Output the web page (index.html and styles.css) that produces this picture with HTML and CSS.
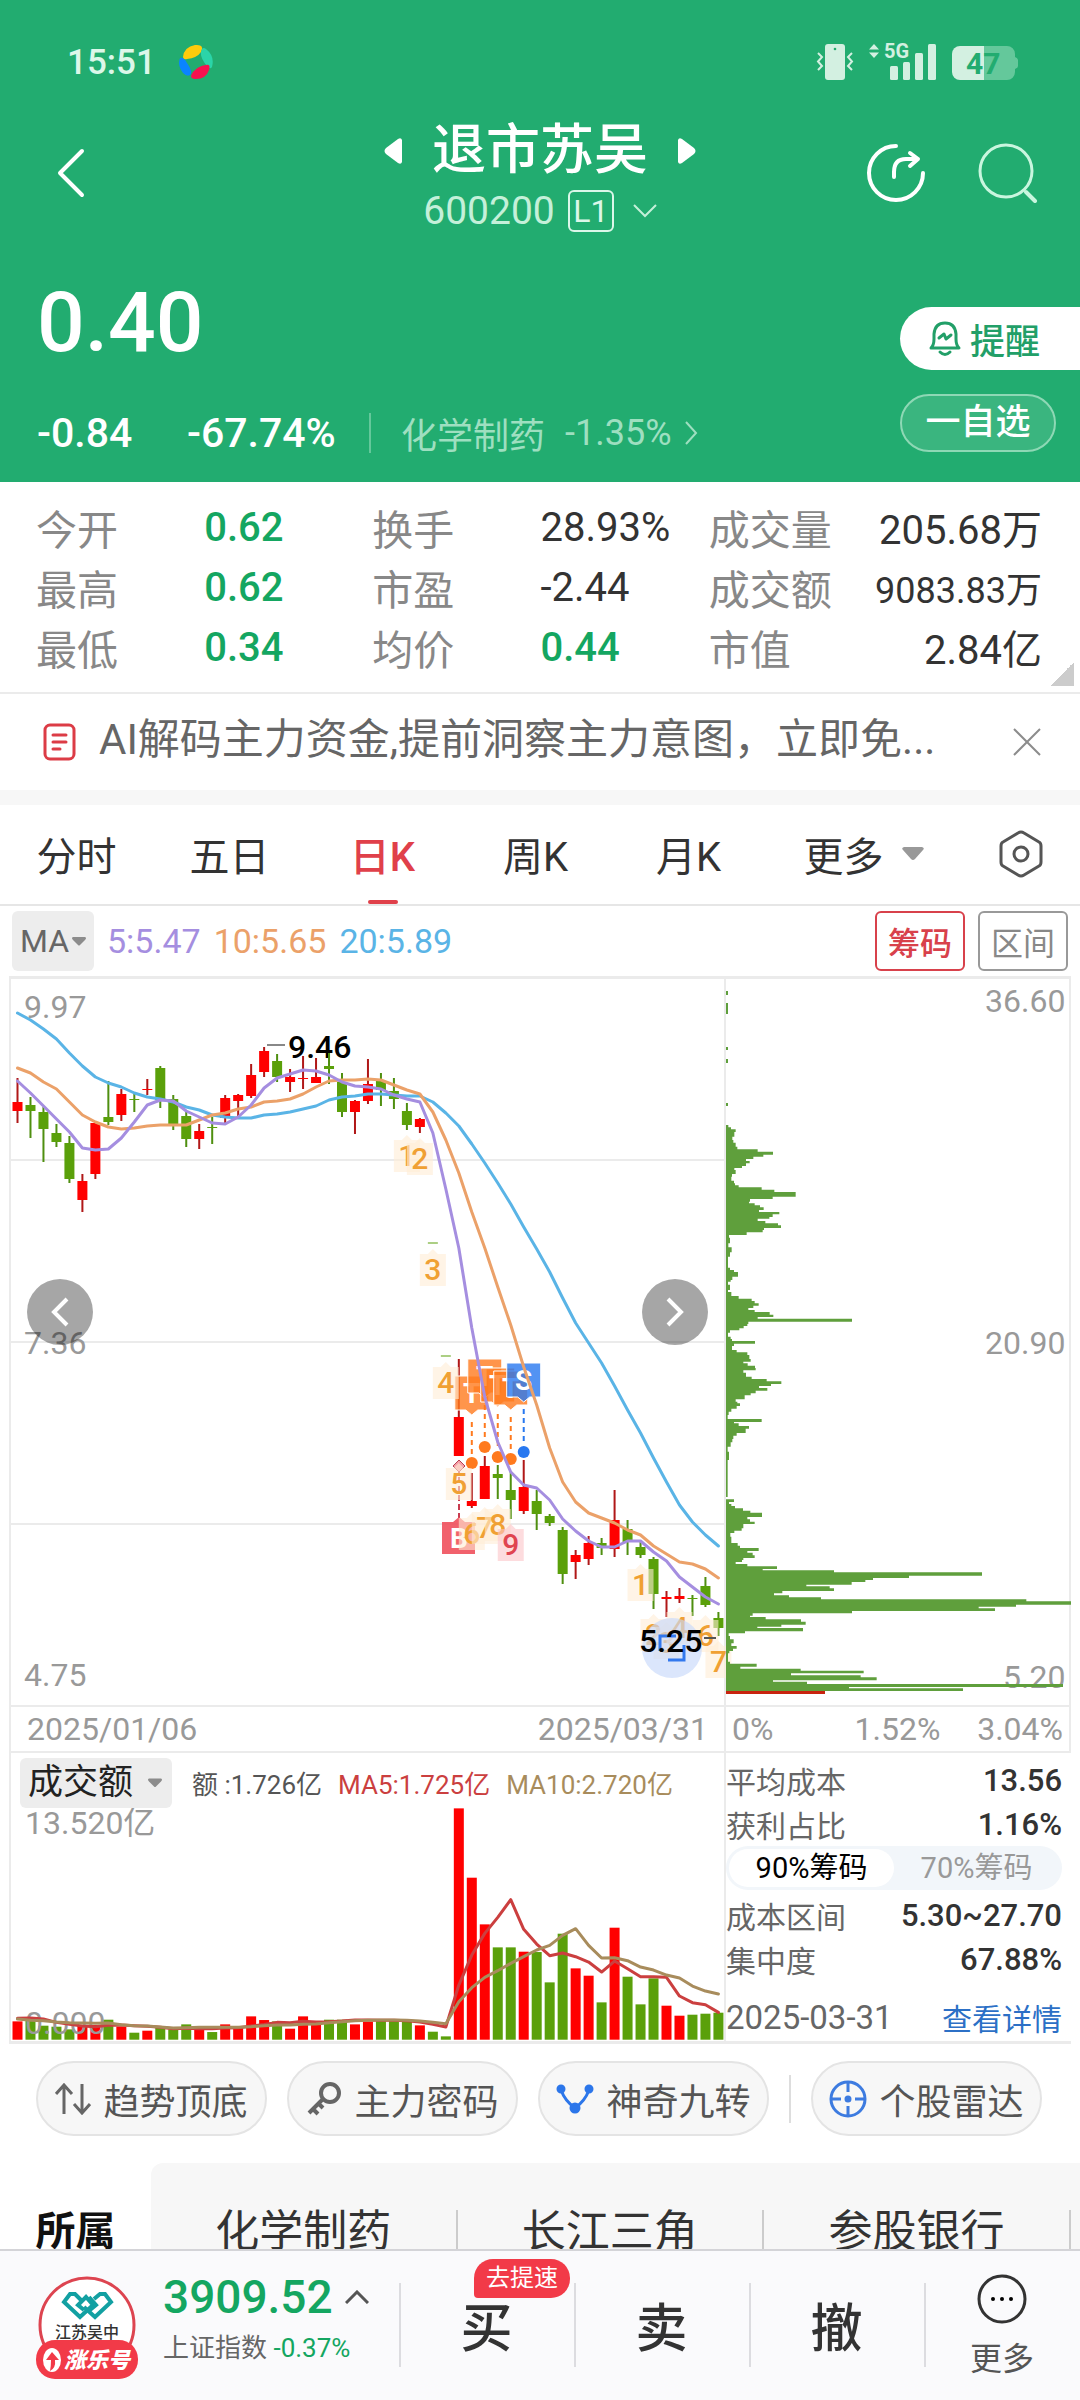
FILE: index.html
```html
<!DOCTYPE html>
<html lang="zh-CN">
<head>
<meta charset="utf-8">
<meta name="viewport" content="width=device-width, initial-scale=1">
<title>退市苏吴 600200</title>
<link rel="stylesheet" href="styles.css">
</head>
<body>
<div class="app">
  <header class="quote-header">
    <div class="status-bar">
      <div class="status-time">
        <span>15:51</span>
        <svg width="36" height="36" viewBox="0 0 36 36" aria-hidden="true">
          <path d="M5 13 Q6 3 17 1 Q27 0 23 8 Q19 14 9 15 Q5 16 5 13Z" fill="#fecb0c"/>
          <path d="M23 8 Q24 2 28 5 Q37 12 34 23 Q32 26 29 22Q22 14 23 8Z" fill="#2bd4a8"/>
          <path d="M31 26 Q28 35 18 35 Q10 35 15 28 Q20 22 28 21 Q33 20 31 26Z" fill="#f8104f"/>
          <path d="M2 14 Q6 13 9 19 Q14 26 13 30 Q10 34 5 29 Q-1 21 2 14Z" fill="#0a84ff"/>
        </svg>
      </div>
      <svg width="204" height="44" viewBox="17 20 204 44" aria-hidden="true" fill="#d3f0e1">
        <rect x="26" y="24" width="20" height="36" rx="3"/>
        <circle cx="36" cy="29" r="1.300" fill="#22ac70"/>
        <path d="M19 33 l4 4 -4 4.500 4 4.500 -4 4 M53 33 l-4 4 4 4.500 -4 4.500 4 4" fill="none" stroke="#d3f0e1" stroke-width="2"/>
        <path d="M75 24 l5 5.500 h-10z M75 38 l5 -5.500 h-10z"/>
        <text x="85" y="38" class="net-label">5G</text>
        <rect x="91" y="46" width="8" height="14" rx="1.500"/>
        <rect x="104" y="42" width="7" height="18" rx="1.500"/>
        <rect x="116" y="33" width="8" height="27" rx="1.500"/>
        <rect x="129" y="24" width="8" height="36" rx="1.500"/>
        <path d="M185 26 h23 a8 8 0 0 1 8 8 v3 q3 1 3 3 v6 q0 2 -3 3 v3 a8 8 0 0 1 -8 8 h-23z" fill="#64c89b"/>
        <path d="M185 26 v34 h-24 a8 8 0 0 1 -8 -8 v-18 a8 8 0 0 1 8 -8z"/>
        <text x="167" y="54" class="battery-label" fill="#22ac70">47</text>
      </svg>
    </div>
    <nav class="nav-bar">
      <button class="icon-button back-button" aria-label="返回">
        <svg width="30" height="52" viewBox="0 0 30 52" fill="none" stroke="#fff" stroke-width="4" stroke-linecap="round" stroke-linejoin="round"><path d="M26 4 L4 26 L26 48"/></svg>
      </button>
      <div class="stock-heading">
        <div class="stock-title">
          <button class="icon-button" aria-label="上一只"><svg width="18" height="26" viewBox="0 0 18 26" fill="#fff"><path d="M18 2 V24 Q17 27 14 25 L2 16 Q-1 13 2 10 L14 1 Q17 -1 18 2Z"/></svg></button>
          <h1>退市苏吴</h1>
          <button class="icon-button" aria-label="下一只"><svg width="18" height="26" viewBox="0 0 18 26" fill="#fff"><path d="M0 2 V24 Q1 27 4 25 L16 16 Q19 13 16 10 L4 1 Q1 -1 0 2Z"/></svg></button>
        </div>
        <div class="stock-code">
          <span>600200</span>
          <span class="level-badge">L1</span>
          <svg class="code-arrow" width="24" height="14" viewBox="0 0 24 14" fill="none" stroke="#c4f0d9" stroke-width="2"><path d="M1 1 L12 12 L23 1"/></svg>
        </div>
      </div>
      <div class="nav-actions">
        <button class="icon-button" aria-label="分享">
          <svg width="60" height="60" viewBox="0 0 60 60" fill="none" stroke="#fff" stroke-width="4" stroke-linecap="round" stroke-linejoin="round"><path d="M30 3 A27 27 0 1 0 57 30 M28 34 V29 Q28 16 40 16 H52 M44 10 L52 16 L44 23"/></svg>
        </button>
        <button class="icon-button" aria-label="搜索">
          <svg width="60" height="60" viewBox="0 0 60 60" fill="none" stroke="#c9f6df" stroke-width="3" stroke-linecap="round"><circle cx="28" cy="28" r="26"/><path d="M48 49 L57 58" stroke-width="4"/></svg>
        </button>
      </div>
    </nav>
    <section class="quote">
      <div class="quote-main">
        <div class="price">0.40</div>
        <div class="change-row">
          <span class="change">-0.84</span>
          <span class="change-pct">-67.74%</span>
          <a class="sector" href="#sector"><span>化学制药</span><span>-1.35%</span>
            <svg width="14" height="24" viewBox="0 0 14 24" fill="none" stroke="currentColor" stroke-width="2"><path d="M2 1 L12 12 L2 23"/></svg></a>
        </div>
      </div>
      <div class="quote-actions">
        <button class="remind-button">
          <svg width="34" height="36" viewBox="0 0 34 36" fill="none" stroke="#229f68" stroke-width="3" stroke-linejoin="round" stroke-linecap="round"><path d="M3 27 Q6 24 6 18 V13 Q7 2 17 2 Q27 2 28 13 V18 Q28 24 31 27Z"/><path d="M11 17 L16 13 L18 18 L23 14 M12 31 Q17 36 22 31"/></svg>
          提醒</button>
        <button class="watch-button">一自选</button>
      </div>
    </section>
  </header>

  <main class="content">
    <section class="stats">
      <dl class="stat-grid">
        <dt>今开</dt><dd class="down">0.62</dd><dt>换手</dt><dd>28.93%</dd><dt>成交量</dt><dd class="last">205.68万</dd>
        <dt>最高</dt><dd class="down">0.62</dd><dt>市盈</dt><dd>-2.44</dd><dt>成交额</dt><dd class="last long">9083.83万</dd>
        <dt>最低</dt><dd class="down">0.34</dd><dt>均价</dt><dd class="down">0.44</dd><dt>市值</dt><dd class="last">2.84亿</dd>
      </dl>
      <span class="expand-corner"></span>
    </section>

    <aside class="notice">
      <svg width="34" height="38" viewBox="0 0 34 38" fill="none" stroke="#dc3c46" stroke-width="3" stroke-linecap="round"><rect x="2" y="2" width="29" height="34" rx="5"/><path d="M10 12 H23 M10 19 H23 M10 26 H17"/></svg>
      <p>AI解码主力资金,提前洞察主力意图，立即免...</p>
      <button class="icon-button" aria-label="关闭"><svg width="28" height="28" viewBox="0 0 28 28" fill="none" stroke="#8c8c8c" stroke-width="2"><path d="M1 1 L27 27 M27 1 L1 27"/></svg></button>
    </aside>

    <nav class="tabs" role="tablist">
      <button class="tab" role="tab">分时</button>
      <button class="tab" role="tab">五日</button>
      <button class="tab active" role="tab" aria-selected="true">日K</button>
      <button class="tab" role="tab">周K</button>
      <button class="tab" role="tab">月K</button>
      <button class="tab" role="tab">更多<svg width="22" height="14" viewBox="0 0 22 14" fill="#999"><path d="M2 0 H20 Q23 1 21 3 L13 12 Q11 14 9 12 L1 3 Q-1 1 2 0Z"/></svg></button>
      <button class="tab" aria-label="设置"><svg width="46" height="48" viewBox="0 0 46 48" fill="none" stroke="#555" stroke-width="3" stroke-linejoin="round"><path d="M20 3 Q23 1 26 3 L41 12 Q43 13 43 16 V32 Q43 35 41 36 L26 45 Q23 47 20 45 L5 36 Q3 35 3 32 V16 Q3 13 5 12Z"/><circle cx="23" cy="24" r="7"/></svg></button>
    </nav>

    <div class="indicator-bar">
      <div class="select-box ma-box">
        <select class="select ma-select" aria-label="主图指标"><option>MA</option><option>BOLL</option></select>
        <svg width="14" height="9" viewBox="0 0 14 9" fill="#8c8c8c"><path d="M1 0 H13 Q15 1 13 3 L8 8 Q7 9 6 8 L1 3 Q-1 1 1 0Z"/></svg>
      </div>
      <span class="ma5">5:5.47</span>
      <span class="ma10">10:5.65</span>
      <span class="ma20">20:5.89</span>
      <div class="indicator-actions">
        <button class="outline-button selected">筹码</button>
        <button class="outline-button">区间</button>
      </div>
    </div>

    <section class="chart-panel">
      <div class="k-chart">
        <svg id="kline" viewBox="9 9 1062 726"></svg>
        <button class="pager pager-prev" aria-label="向左"><svg width="20" height="30" viewBox="0 0 20 30" fill="none" stroke="#fff" stroke-width="4"><path d="M17 2 L4 15 L17 28"/></svg></button>
        <button class="pager pager-next" aria-label="向右"><svg width="20" height="30" viewBox="0 0 20 30" fill="none" stroke="#fff" stroke-width="4"><path d="M3 2 L16 15 L3 28"/></svg></button>
      </div>
      <div class="chart-grid">
        <div class="axis-row dates"><span>2025/01/06</span><span>2025/03/31</span></div>
        <div class="axis-row percents"><span>0%</span><span>1.52%</span><span>3.04%</span></div>
        <div class="volume">
          <div class="volume-head">
            <div class="select-box volume-box">
              <select class="select volume-select" aria-label="副图指标"><option>成交额</option><option>成交量</option></select>
              <svg width="14" height="10" viewBox="0 0 14 9" fill="#8c8c8c"><path d="M1 0 H13 Q15 1 13 3 L8 8 Q7 9 6 8 L1 3 Q-1 1 1 0Z"/></svg>
            </div>
            <span class="amount">额 :1.726亿</span>
            <span class="vol-ma5">MA5:1.725亿</span>
            <span class="vol-ma10">MA10:2.720亿</span>
          </div>
          <svg id="volume" viewBox="9 0 717 233"></svg>
        </div>
        <div class="chip-stats">
          <div class="chip-row"><span>平均成本</span><b>13.56</b></div>
          <div class="chip-row"><span>获利占比</span><b>1.16%</b></div>
          <div class="segment"><button class="on">90%筹码</button><button>70%筹码</button></div>
          <div class="chip-row"><span>成本区间</span><b>5.30~27.70</b></div>
          <div class="chip-row"><span>集中度</span><b>67.88%</b></div>
          <div class="chip-row chip-foot"><time>2025-03-31</time><a href="#detail">查看详情</a></div>
        </div>
      </div>
    </section>

    <div class="tools">
      <button class="tool"><svg width="36" height="34" viewBox="0 0 36 34" fill="none" stroke="#666" stroke-width="3"><path d="M9 32 V4 M1 12 L9 3 L17 12 M27 2 V30 M19 22 L27 31 L35 22"/></svg>趋势顶底</button>
      <button class="tool"><svg width="36" height="36" viewBox="0 0 36 36" fill="none" stroke="#666" stroke-width="4"><circle cx="24" cy="12" r="9"/><path d="M17 18 L3 32 M6 27 L12 33 M12 22 L17 27"/></svg>主力密码</button>
      <button class="tool"><svg width="38" height="32" viewBox="0 0 38 32" fill="#2c76ea" stroke="#2c76ea" stroke-width="3"><path d="M5 7 Q9 18 19 25 Q29 18 33 7" fill="none"/><circle cx="5" cy="6" r="3"/><circle cx="33" cy="6" r="3"/><circle cx="19" cy="25" r="4"/></svg>神奇九转</button>
      <i class="tool-divider"></i>
      <button class="tool"><svg width="38" height="38" viewBox="0 0 38 38" fill="none" stroke="#3d7be0" stroke-width="3"><circle cx="19" cy="19" r="17"/><path d="M19 2 V12 M19 26 V36 M2 19 H12 M26 19 H36"/><circle cx="19" cy="19" r="2" fill="#3d7be0"/></svg>个股雷达</button>
    </div>

    <section class="belongs" id="sector">
      <h2>所属</h2>
      <div class="belong-list">
        <a href="#a">化学制药</a><a href="#b">长江三角</a><a href="#c">参股银行</a>
      </div>
    </section>
  </main>

  <footer class="trade-bar">
    <a class="brand" href="#brand" aria-label="涨乐号">
      <svg width="104" height="104" viewBox="15 26 104 104">
        <circle cx="67" cy="75" r="47" fill="#fff" stroke="#dd4450" stroke-width="3"/>
        <g fill="none" stroke="#12a0a2" stroke-width="4"><path d="M61 50 L55 44 H50 L44 52 L60 67 L73 55 L66 47 L58 55 L64 60"/><path d="M74 49 L80 44 H85 L91 52 L75 67 L64 57 M69 47 L76 55 L70 60"/></g>
        <text x="67" y="88" class="brand-name">江苏吴中</text>
        <rect x="16" y="90" width="102" height="39" rx="19" fill="#f23a48"/>
        <ellipse cx="32" cy="110" rx="9" ry="12" fill="#fff"/>
        <path d="M32 102 L39 110 H35 Q36 118 30 121 Q31 116 31 110 H26Z" fill="#f23a48"/>
        <text x="77" y="118" class="brand-tag">涨乐号</text>
      </svg>
    </a>
    <a class="index" href="#index">
      <span class="index-value">3909.52<svg width="24" height="14" viewBox="0 0 24 14" fill="none" stroke="#555" stroke-width="3"><path d="M1 13 L12 2 L23 13"/></svg></span>
      <span class="index-name">上证指数 <em>-0.37%</em></span>
    </a>
    <div class="trade-cell"><button class="trade-button">买</button><span class="speed-badge">去提速</span></div>
    <div class="trade-cell"><button class="trade-button">卖</button></div>
    <div class="trade-cell"><button class="trade-button">撤</button></div>
    <div class="trade-cell"><button class="more-button"><svg width="52" height="52" viewBox="0 0 52 52"><circle cx="26" cy="26" r="23" fill="none" stroke="#333" stroke-width="3"/><circle cx="17" cy="26" r="2"/><circle cx="26" cy="26" r="2"/><circle cx="35" cy="26" r="2"/></svg>更多</button></div>
  </footer>
</div>
<script src="chart.js"></script>
</body>
</html>
```

FILE: styles.css
```css
* { box-sizing: border-box; }

body {
  margin: 0;
  background: #fff;
  color: #333;
  font-family: Roboto, "Noto Sans CJK SC", sans-serif;
}

button, select {
  margin: 0;
  padding: 0;
  border: 0;
  background: none;
  color: inherit;
  font: inherit;
}

a { color: inherit; text-decoration: none; }
svg { display: block; }

.icon-button { display: flex; align-items: center; justify-content: center; }

.app {
  display: flex;
  flex-direction: column;
  height: 100vh;
}

/* Header */
.quote-header { flex: none; background: #22ac70; color: #fff; }

.status-bar {
  display: flex;
  justify-content: space-between;
  align-items: center;
  height: 116px;
  padding: 8px 60px 0 67px;
}

.status-time {
  display: flex;
  align-items: center;
  gap: 22px;
  color: #dcf7e9;
  font-size: 35px;
  font-weight: 500;
}

.net-label { font-size: 20px; font-weight: 700; }
.battery-label { font-size: 30px; font-weight: 700; }

.nav-bar {
  display: grid;
  grid-template-columns: 1fr auto 1fr;
  height: 120px;
  padding: 0 42px;
}

.back-button { justify-self: start; padding: 0 0 6px 14px; }

.stock-heading { display: flex; flex-direction: column; align-items: center; }

.stock-title {
  display: flex;
  align-items: center;
  gap: 30px;
  height: 70px;
}

.stock-title h1 {
  margin: 0;
  font-size: 54px;
  font-weight: 500;
  line-height: 70px;
}

.stock-code {
  display: flex;
  align-items: center;
  gap: 13px;
  height: 50px;
  color: #c4f0d9;
  font-size: 39px;
}

.level-badge {
  width: 46px;
  height: 42px;
  border: 2px solid #dcf7e9;
  border-radius: 6px;
  color: #dcf7e9;
  font-size: 32px;
  line-height: 38px;
  text-align: center;
}

.code-arrow { margin-left: 6px; }

.nav-actions {
  display: flex;
  justify-content: flex-end;
  align-items: center;
  gap: 52px;
  padding-bottom: 6px;
}

.quote {
  display: flex;
  justify-content: space-between;
  padding: 26px 0 24px 37px;
}

.price {
  margin-bottom: 26px;
  font-size: 84px;
  font-weight: 500;
  line-height: 122px;
  height: 120px;
}

.change-row {
  display: flex;
  align-items: center;
  height: 50px;
  font-size: 41px;
  font-weight: 500;
}

.change { width: 150px; }
.change-pct { width: 182px; }

.sector {
  display: flex;
  align-items: center;
  gap: 20px;
  height: 40px;
  padding-left: 30px;
  border-left: 2px solid #64c89b;
  color: #9edfc0;
  font-size: 36px;
  font-weight: 400;
}

.sector svg { margin-left: -8px; }

.quote-actions {
  display: flex;
  flex-direction: column;
  gap: 24px;
  width: 180px;
  padding-top: 45px;
}

.remind-button {
  display: flex;
  align-items: center;
  gap: 8px;
  height: 63px;
  padding-left: 28px;
  border-radius: 32px 0 0 32px;
  background: #fff;
  color: #229f68;
  font-size: 35px;
  font-weight: 500;
}

.watch-button {
  width: 156px;
  height: 58px;
  border: 2px solid #8ed8b5;
  border-radius: 29px;
  background: #3ab57f;
  font-size: 35px;
  font-weight: 500;
  line-height: 54px;
}

/* Content */
.content { flex: 1; min-height: 0; overflow: hidden; }

.stats { position: relative; border-bottom: 2px solid #ebebeb; }

.stat-grid {
  display: grid;
  grid-template-columns: repeat(4, 168fr) 126fr 207fr;
  grid-auto-rows: 60px;
  align-items: center;
  margin: 0;
  padding: 15px 38px 15px 36px;
  font-size: 40px;
}

.stat-grid dt { color: #888; font-size: 41px; white-space: nowrap; }
.stat-grid dd { margin: 0; white-space: nowrap; }
.stat-grid .down { color: #14a661; font-weight: 500; }
.stat-grid .last { text-align: right; }
.stat-grid .long { font-size: 36px; }

.expand-corner {
  position: absolute;
  right: 6px;
  bottom: 6px;
  width: 24px;
  height: 24px;
  background: linear-gradient(135deg, transparent 50%, #ccc 50%);
}

.notice {
  display: flex;
  align-items: center;
  gap: 22px;
  height: 111px;
  padding: 0 39px 0 43px;
  border-bottom: 15px solid #f7f7f7;
  color: #666;
  font-size: 42px;
  line-height: 60px;
}

.notice p { flex: 1; margin: 0; padding-bottom: 4px; white-space: nowrap; }

.tabs {
  display: grid;
  grid-template-columns: repeat(5, 153fr) 197fr 118fr;
  height: 101px;
  border-bottom: 2px solid #e6e6e6;
}

.tab {
  position: relative;
  display: flex;
  align-items: center;
  justify-content: center;
  gap: 18px;
  padding-bottom: 2px;
  color: #333;
  font-size: 40px;
}

.tab.active { color: #e0404a; font-weight: 500; }

.tab.active::after {
  content: "";
  position: absolute;
  bottom: 0;
  width: 30px;
  height: 4px;
  border-radius: 2px;
  background: #e0404a;
}

.indicator-bar {
  display: flex;
  align-items: center;
  gap: 13px;
  height: 70px;
  padding: 0 12px;
  font-size: 34px;
}

.select-box {
  position: relative;
  display: flex;
  align-items: center;
  border-radius: 6px;
  background: #ededed;
}

.select-box svg { position: absolute; right: 8px; pointer-events: none; }
.select { width: 100%; height: 100%; appearance: none; }
.ma-box { width: 82px; height: 60px; }
.ma-select { padding-left: 8px; color: #666; font-size: 32px; }

.ma5 { color: #a58ee0; }
.ma10 { color: #eba169; }
.ma20 { color: #5ab4e6; }

.indicator-actions { display: flex; gap: 13px; margin-left: auto; }

.outline-button {
  width: 90px;
  height: 60px;
  border: 2px solid #999;
  border-radius: 6px;
  color: #888;
  font-size: 32px;
}

.outline-button.selected { border-color: #d8414b; color: #d8414b; font-weight: 500; }

/* Charts */
.chart-panel { margin: 0 9px; border-top: 3px solid #ebebeb; }
.k-chart { position: relative; }
.k-chart > svg, .volume > svg { width: 100%; height: auto; overflow: visible; }

.pager {
  position: absolute;
  top: 300px;
  display: flex;
  align-items: center;
  justify-content: center;
  width: 66px;
  height: 66px;
  border-radius: 50%;
  background: rgba(0, 0, 0, .35);
}

.pager-prev { left: 18px; }
.pager-next { right: 363px; }

.axis-label { fill: #999; font-size: 32px; }
.price-label { fill: #000; font-size: 32px; font-weight: 500; }
.count-label { fill: #f0a033; font-size: 30px; font-weight: 500; text-anchor: middle; }
.count-label.final { fill: #e04450; }
.trade-label { fill: #fff; font-size: 28px; font-weight: 700; text-anchor: middle; }
.line { fill: none; stroke-width: 3; stroke-linejoin: round; stroke-linecap: round; }

.chart-grid {
  display: grid;
  grid-template-columns: 717fr 345fr;
  border-bottom: 3px solid #ebebeb;
}

.axis-row {
  display: flex;
  align-items: center;
  justify-content: space-between;
  height: 48px;
  border: 2px solid #ebebeb;
  color: #999;
  font-size: 32px;
}

.dates { padding: 0 16px; }
.percents { padding: 0 6px; border-left: 0; }
.percents span { flex: 1; }
.percents span:nth-child(2) { text-align: center; }
.percents span:last-child { text-align: right; }

.volume { box-shadow: inset -2px 0 #ebebeb, inset 2px 0 #ebebeb; }

.volume-head {
  display: flex;
  align-items: center;
  gap: 16px;
  height: 55px;
  padding: 4px 0 0 11px;
  font-size: 26px;
}

.volume-box { width: 152px; height: 50px; margin-right: 4px; }
.volume-box svg { right: 10px; }
.volume-select { padding-left: 8px; color: #222; font-size: 35px; }
.amount { color: #555; }
.vol-ma5 { color: #cb3f3f; }
.vol-ma10 { color: #a88c5c; }

.chip-stats { padding: 5px 9px 0 0; font-size: 30px; }

.chip-row {
  display: flex;
  align-items: center;
  justify-content: space-between;
  height: 44px;
  color: #666;
}

.chip-row b { color: #333; font-size: 31px; font-weight: 500; }
.chip-row a { color: #2c70c6; }
.chip-foot { margin-top: 14px; }
.chip-foot time { font-size: 33px; }

.segment {
  display: flex;
  height: 44px;
  margin-bottom: 3px;
  padding: 3px;
  border-radius: 22px;
  background: #f2f6fa;
}

.segment button { flex: 1; border-radius: 20px; color: #999; font-size: 29px; line-height: 38px; }
.segment .on { background: #fff; color: #000; }

/* Tools */
.tools {
  display: flex;
  align-items: center;
  gap: 20px;
  padding: 17px 38px 27px 36px;
}

.tool {
  display: flex;
  flex: 1;
  align-items: center;
  justify-content: center;
  gap: 12px;
  height: 75px;
  border: 2px solid #e4e4e4;
  border-radius: 38px;
  background: #f7f7f7;
  color: #555;
  font-size: 36px;
  white-space: nowrap;
}

.tool-divider { width: 2px; height: 48px; background: #ddd; }

.belongs { display: flex; height: 138px; }

.belongs h2 {
  width: 151px;
  margin: 0;
  color: #111;
  font-size: 40px;
  font-weight: 700;
  line-height: 138px;
  text-align: center;
}

.belong-list {
  display: flex;
  flex: 1;
  align-items: center;
  overflow: hidden;
  border-radius: 12px 0 0 0;
  background: #f7f7f7;
}

.belong-list a {
  flex: none;
  width: 33%;
  border-right: 2px solid #ccc;
  color: #333;
  font-size: 44px;
  line-height: 44px;
  text-align: center;
}

/* Trade bar */
.trade-bar {
  display: grid;
  grid-template-columns: 163fr 236fr repeat(3, 175fr) 156fr;
  flex: none;
  height: 151px;
  border-top: 2px solid #d4d4d8;
  background: #fafafc;
}

.brand { padding: 25px 0 0 35px; }
.brand-name { font-size: 16px; font-weight: 500; text-anchor: middle; fill: #333; }
.brand-tag { font-size: 22px; font-weight: 900; font-style: italic; text-anchor: middle; fill: #fff; }

.index { padding-top: 16px; }

.index-value {
  display: flex;
  align-items: center;
  gap: 12px;
  color: #14a661;
  font-size: 46px;
  font-weight: 500;
  line-height: 60px;
}

.index-name { display: block; color: #666; font-size: 26px; line-height: 42px; }
.index-name em { color: #14a661; font-size: 26px; font-style: normal; }

.trade-cell {
  position: relative;
  display: flex;
  align-items: center;
  justify-content: center;
}

.trade-cell::before {
  content: "";
  position: absolute;
  left: 0;
  top: 32px;
  width: 2px;
  height: 84px;
  background: #dcdce0;
}

.trade-button { padding-top: 8px; font-size: 52px; font-weight: 500; line-height: 60px; }

.speed-badge {
  position: absolute;
  top: 8px;
  left: 75px;
  width: 96px;
  height: 39px;
  border-radius: 19px 19px 19px 4px;
  background: #f23a48;
  color: #fff;
  font-size: 24px;
  line-height: 38px;
  text-align: center;
}

.more-button {
  display: flex;
  flex-direction: column;
  align-items: center;
  gap: 14px;
  color: #555;
  font-size: 32px;
  line-height: 40px;
}
```

FILE: chart.js
```js
const RED = '#ff0000';
const GREEN = '#5aa00a';
const GRID = '#ebebeb';
const STEP = 12.98;
const xAt = (i) => 17.5 + STEP * i;

const rect = (x, y, w, h, fill, extra = '') =>
  `<rect x="${x}" y="${y}" width="${w}" height="${h}" fill="${fill}" ${extra}/>`;
const text = (x, y, cls, s) => `<text x="${x}" y="${y}" class="${cls}">${s}</text>`;
const polyline = (ys, color) =>
  `<polyline class="line" stroke="${color}" points="${ys.map((y, i) => `${xAt(i)},${y}`).join(' ')}"/>`;

// Each day: direction, body top, body bottom, high, low.
const days = [
  ['R',132,141,108,153],['G',135,141,127,168],['G',142,159,137,192],['G',163,172,154,177],
  ['G',173,209,166,213],['R',211,230,204,242],['R',153,204,152,209],['G',147,152,111,155],
  ['R',124,145,119,151],['G',129,130,124,142],['R',119,120,109,125],['G',98,130,96,138],
  ['G',129,155,125,160],['G',146,169,142,177],['R',161,169,154,179],['G',157,158,147,174],
  ['R',128,148,125,153],['R',125,131,124,146],['R',105,126,94,128],['R',81,102,77,107],
  ['G',91,107,84,112],['R',107,112,99,122],['R',108,109,86,119],['R',107,113,88,113],
  ['G',96,99,83,114],['G',112,142,103,147],['R',131,142,130,164],['R',114,131,89,134],
  ['G',111,120,103,136],['G',121,129,108,139],['G',141,155,133,160],['R',149,157,148,163],
  ['G',272.5,273.5,273,273],['G',385.5,386.5,386,386],['R',447,486,389,486],['R',531,536,503,538],
  ['R',496,529,486,529],['G',504,508,495,529],['G',520,530,502,549],['R',517,541,490,544],
  ['G',531,544,520,560],['G',546,553,544,556],['G',560,604,557,614],['R',585,592,580,609],
  ['R',573,589,566,595],['G',573,578,568,585],['R',550,579,520,587],['G',559,572,550,585],
  ['G',577,585,572,588],['G',589,624,587,639],['R',627,629,621,647],['R',626,629,618,633],
  ['G',628,629,625,646],['G',616,635,607,637],['G',648,658,642,666]
];

const ma5 = [111,123,136,149,162,178,180,179,168,152,135,130,131,141,147,153,154,147,135,118,108,104,100,101,105,112,116,117,119,125,129,132,163,219,278,358,427,472,502,515,518,530,549,561,571,577,577,571,571,582,591,607,617,627,634];
const ma10 = [98,103,112,119,132,145,152,157,159,158,156,155,155,155,150,145,143,139,137,132,131,129,124,117,111,110,110,109,110,115,120,124,142,170,203,242,278,317,355,397,435,478,512,532,543,548,553,560,565,576,584,592,594,599,608];
const ma20 = [43,50,59,69,83,96,107,113,117,123,127,129,132,137,140,145,147,148,148,145,144,142,139,136,130,127,126,124,124,125,126,126,132,143,156,174,193,213,234,257,279,302,328,353,373,393,416,440,463,488,512,535,552,565,576];

// Chip distribution: the vertical position (in thirds) where each width starts.
const upper = '465:55,472:63,478:77,486:73,500:67,510:70,518:77,530:82,538:143,545:189,554:160,560:130,567:108,573:119,580:108,588:96,594:73,600:77,612:66,620:64,632:72,640:75,646:86,652:155,659:193,666:257,680:188,687:120,695:117,700:134,706:150,712:161,720:147,726:208,733:188,741:178,746:143,753:166,760:204,766:213,774:162,780:158,787:110,795:57,803:60,820:55,832:65,847:60,860:54,893:60,900:72,906:84,920:67,930:62,935:54,944:60,960:54,966:64,978:86,986:125,993:134,1000:146,1007:130,1014:115,1020:134,1026:179,1034:190,1041:143,1046:426,1055:115,1062:112,1068:101,1075:88,1081:60,1088:54,1100:62,1107:66,1113:135,1121:72,1128:66,1140:80,1147:112,1155:118,1167:122';
const lower = '5:100,10:113,17:135,24:137,31:100,38:108,50:125,57:170,64:214,72:183,78:147,84:172,92:137,100:122,106:104,118:77,125:82,130:90,138:80,146:64,155:56,165:53,177:155,186:72,190:86,198:117,206:107,219:80,227:70,237:67,247:62,260:53,275:57,300:53,411:48,418:72,426:57,432:64,438:75,445:99,452:121,458:156,471:112,478:120,485:134,492:100,505:95,512:73,519:61,530:64,549:83,557:90,564:146,573:112,578:128,586:134,594:100,600:96,606:77,612:112,619:201,627:158,631:372,637:816,647:597,654:489,660:466,666:425,674:289,679:359,685:372,693:217,700:192,706:237,712:333,718:949,724:1083,734:918,740:806,745:855,753:426,760:128,767:120,771:167,778:273,785:287,794:214,800:142,804:279,814:105,820:56,828:60,838:71,850:64,858:80,866:69,873:58,880:54,905:60,911:140,920:91,926:272,932:461,940:243,946:452,952:500,961:189,965:291,972:1059,981:417,985:759';
const parse = (s, offset) => s.split(',').map((p) => {
  const [y, w] = p.split(':').map(Number);
  return [(y + offset) / 3, 710 + w / 3];
});
const chips = [...parse(upper, 0), ...parse(lower, 1170)];

function drawKline() {
  let s = '';
  for (const y of [189, 371, 553]) s += rect(9, y, 717, 2, GRID);
  s += rect(9, 9, 2, 726, GRID) + rect(724, 9, 2, 726, GRID) + rect(1069, 9, 2, 726, GRID);
  s += text(24, 48, 'axis-label', '9.97') + text(24, 384, 'axis-label', '7.36') + text(24, 716, 'axis-label', '4.75');
  s += text(985, 42, 'axis-label', '36.60') + text(985, 384, 'axis-label', '20.90') + text(1003, 718, 'axis-label', '5.20');
  s += rect(267, 74, 18, 2, '#888') + text(288, 88, 'price-label', '9.46');

  days.forEach(([dir, top, bottom, high, low], i) => {
    const x = xAt(i);
    s += rect(x - 1, high, 2, low - high, dir === 'R' ? '#b01818' : '#4f8f10');
    s += rect(x - 5, top, 10, bottom - top, dir === 'R' ? RED : GREEN);
  });

  // Trade markers with a dashed drop line to the price dot.
  const flags = [[35,406,493],[36,389,477],[37,398,487],[38,401,489],[39,393,482]];
  for (const [i, top, dot] of flags) {
    const x = xAt(i);
    const sell = i === 39;
    const color = sell ? '#2878f0' : '#ff7a1e';
    s += `<path d="M${x} ${top + 46} V${dot - 8}" stroke="${color}" stroke-width="2" stroke-dasharray="5 4"/>`;
    s += `<circle cx="${x}" cy="${dot}" r="6" fill="${color}"/>`;
    s += `<path d="M${x - 17} ${top} h34 v34 h-11 l-6 5 -6 -5 h-11z" fill="${color}" fill-opacity=".8" stroke="#fff"/>`;
    s += text(x, top + 27, 'trade-label', sell ? 'S' : 'T');
  }
  s += `<path d="M459 498 V548" stroke="#c83c50" stroke-width="2" stroke-dasharray="6 3"/>`;
  s += `<path d="M453 496 l6 -6 6 6 -6 6z" fill="#f5a0a8" stroke="#b84050"/>`;
  s += `<path d="M442 552 h11 l6 -5 6 5 h10 v32 h-33z" fill="#f0505c" fill-opacity=".9"/>` + text(459, 578, 'trade-label', 'B');

  const counts = [[30,170,1],[31,173,2],[32,284,3],[33,397,4],[34,498,5],[35,548,6],[36,542,7],[37,539,8],[38,559,9],
    [48,599,1],[49,649,2],[50,657,3],[51,642,4],[53,650,6],[54,676,7]];
  for (const [i, top, n] of counts) {
    const x = xAt(i);
    const final = n === 9;
    s += `<path d="M${x - 13} ${top} h8 l5 -5 5 5 h8 v32 h-26z" fill="${final ? '#fbc4c8' : '#ffecd6'}" fill-opacity=".6"/>`;
    s += text(x, top + 26, final ? 'count-label final' : 'count-label', n);
  }

  s += polyline(ma20, '#5ab4e6') + polyline(ma10, '#eba169') + polyline(ma5, '#a58ee0');

  s += `<circle cx="672" cy="678" r="30" fill="#c8d8fa" fill-opacity=".65"/>`;
  s += `<path d="M660 681 V666 H676 M684 675 V690 H668" fill="none" stroke="#3278ee" stroke-width="3"/>`;
  s += text(639, 682, 'price-label', '5.25') + rect(704, 667, 12, 2, '#555');

  let d = `M726 ${chips[0][0]}`;
  chips.forEach(([y, x], i) => {
    const next = i + 1 < chips.length ? chips[i + 1][0] : 721;
    d += `L${x} ${y}V${next}`;
    d += i + 1 < chips.length ? `H${chips[i + 1][1]}` : 'H726Z';
  });
  s += `<path d="${d}" fill="#5f9f3c"/>`;
  for (const [y, h] of [[21,4],[33,11],[77,3],[89,4],[133,3]]) s += rect(726, y, 2, h, '#5f9f3c');
  s += rect(726, 721, 99, 3, '#c8230f');
  document.getElementById('kline').innerHTML = s;
}

// Turnover bars: top edge of each bar in thirds of a unit, baseline at 1049.
const BASE = 1049;
const bars = [994,990,1007,1010,1018,1008,1005,989,1010,1028,1022,1012,1018,1003,1018,1026,1003,1010,979,990,994,1016,979,993,989,989,1003,995,990,990,993,1006,1025,1039,355,563,703,772,772,785,786,877,731,835,857,937,713,860,943,865,947,977,974,971,968];
const colors = 'RGGGGRRGRGRGGGRGRRRRGRRRGGRRGGGRGGRRRGGRGGGRRGRGGGRRGGG';
const volMa5 = [985,984,987,997,1003,1008,1010,1006,1005,1007,1009,1012,1016,1015,1016,1016,1014,1013,1008,1003,997,998,994,996,995,993,990,990,991,991,992,996,1003,1011,885,795,730,682,629,718,762,797,789,800,816,846,813,836,860,860,862,918,938,944,967];
const volMa10 = [987,991,992,996,998,999,1000,999,1004,1007,1008,1011,1014,1013,1012,1012,1012,1012,1010,1007,1005,1005,1003,1002,998,995,992,991,990,990,991,993,997,1001,935,893,862,842,820,800,780,766,736,716,766,804,803,812,831,840,855,864,888,903,912];

function drawVolume() {
  const y = (v) => 231.7 - (BASE - v) / 3;
  let s = '';
  bars.forEach((v, i) => {
    s += rect(xAt(i) - 5, y(v), 10, (BASE - v) / 3, colors[i] === 'R' ? RED : GREEN);
  });
  s += text(25, 26, 'axis-label', '13.520亿') + text(25, 226, 'axis-label', '0.000');
  s += polyline(volMa5.map(y), '#cb3f3f') + polyline(volMa10.map(y), '#a88c5c');
  document.getElementById('volume').innerHTML = s;
}

drawKline();
drawVolume();
```
